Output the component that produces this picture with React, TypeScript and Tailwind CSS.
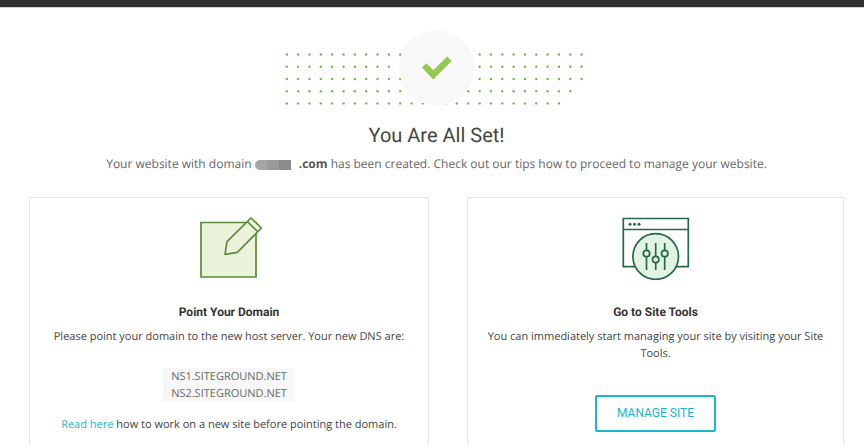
import type { ReactNode } from "react";

const DOT_ROWS = [27, 27, 27, 26, 25];

function SuccessBanner() {
  return (
    <svg width="303" height="76" viewBox="0 0 303 76" aria-hidden="true">
      {DOT_ROWS.map((count, row) =>
        Array.from({ length: count }, (_, col) => (
          <circle key={`${row}-${col}`} cx={1.8 + col * 11.34} cy={24.5 + row * 12.22} r="1.2" fill="#6cbf45" />
        )),
      )}
      <circle cx="151.7" cy="38" r="37.7" fill="#f8f8f8" />
      <path d="M137 37.6l4.3-4.3 7 6.9 13.9-13.7 4.5 4.5-18.4 18.4z" fill="#93c94f" />
    </svg>
  );
}

function PencilIcon() {
  return (
    <svg className="overflow-visible" width="60" height="64" viewBox="0 0 60 64" fill="none" stroke="#5a8a3a" strokeWidth="1.7" aria-hidden="true">
      <path d="M2 6.5h55v54.5H2z" fill="#ecf3dc" />
      <path d="M52 2L62.5 12 38.3 36.3 26 38.3 28 25.7z" fill="#ecf3dc" strokeLinejoin="round" />
      <path d="M48.3 5.5L58.5 15.5" />
    </svg>
  );
}

function SiteToolsIcon() {
  return (
    <svg width="68" height="64" viewBox="0 0 68 64" fill="none" stroke="#25684a" strokeWidth="1.7" aria-hidden="true">
      <path d="M1.3 2.5h65v48.2h-65zM1.3 13.5h65" />
      <g fill="#25684a" stroke="none">
        <circle cx="8" cy="8.2" r="1.5" />
        <circle cx="12.5" cy="8.2" r="1.5" />
        <circle cx="17" cy="8.2" r="1.5" />
      </g>
      <circle cx="33.7" cy="40.5" r="22.8" fill="#e2f3e6" />
      <path d="M24.5 27v27M33.7 27v27M42.7 27v27" />
      <g fill="#e2f3e6">
        <circle cx="24.5" cy="37.5" r="3.2" />
        <circle cx="33.7" cy="43.5" r="3.2" />
        <circle cx="42.7" cy="37.5" r="3.2" />
      </g>
    </svg>
  );
}

function Card({ icon, title, children }: { icon: ReactNode; title: string; children: ReactNode }) {
  return (
    <section className="flex flex-col items-center border border-b-0 border-[#e5e5e5] px-4 pt-[18px] text-center text-[11px] leading-[17px] text-[#444]">
      {icon}
      <h2 className="mt-6 mb-2 font-['Roboto',sans-serif] text-xs leading-4 font-bold text-[#333]">{title}</h2>
      {children}
    </section>
  );
}

export default function App() {
  return (
    <div className="flex min-h-screen flex-col bg-white font-['Open_Sans',sans-serif] [text-rendering:geometricPrecision]">
      <header className="h-2 border-b border-[#d0d0d0] bg-[#33312f]" />
      <main className="flex flex-1 flex-col pr-5 pl-[29px]">
        <div className="flex flex-col items-center pt-[22px] text-center">
          <SuccessBanner />
          <h1 className="mt-[17px] font-['Roboto',sans-serif] text-xl leading-6 text-[#444]">You Are All Set!</h1>
          <p className="mt-[7px] text-xs leading-5 text-[#666]">
            Your website with domain{" "}
            <span className="inline-flex h-[10px] w-9 overflow-hidden rounded-l-full align-middle">
              <span className="flex-1 bg-[#a6a6a6]" />
              <span className="flex-1 bg-[#9a9a9a]" />
              <span className="flex-1 bg-[#8b8b8b]" />
            </span>
            <b className="ml-2 font-bold text-[#555]">.com</b> has been created. Check out our tips how to proceed to
            manage your website.
          </p>
        </div>
        <div className="mt-[23px] grid flex-1 grid-cols-[400fr_377fr] gap-[38px]">
          <Card icon={<PencilIcon />} title="Point Your Domain">
            <p>Please point your domain to the new host server. Your new DNS are:</p>
            <p className="mt-[23px] bg-[#f7f7f7] px-2 text-[#666]">
              NS1.SITEGROUND.NET
              <br />
              NS2.SITEGROUND.NET
            </p>
            <p className="mt-[14px]">
              <a href="#guide" className="text-[#22b8d1]">
                Read here
              </a>{" "}
              how to work on a new site before pointing the domain.
            </p>
          </Card>
          <Card icon={<SiteToolsIcon />} title="Go to Site Tools">
            <p>You can immediately start managing your site by visiting your Site Tools.</p>
            <button
              type="button"
              className="mt-[33px] rounded-xs border-2 border-[#1ab5d0] px-5 py-2 font-['Roboto',sans-serif] text-xs leading-[17px] text-[#1ab5d0]"
            >
              MANAGE SITE
            </button>
          </Card>
        </div>
      </main>
    </div>
  );
}
